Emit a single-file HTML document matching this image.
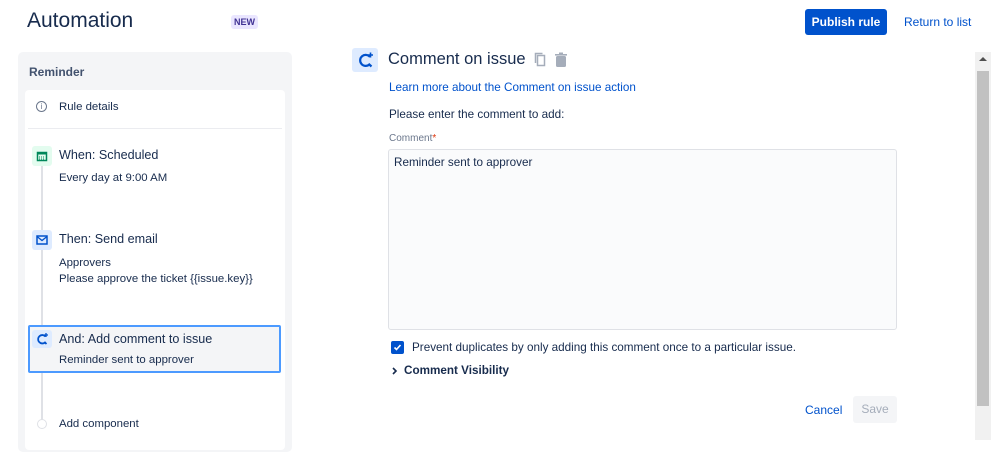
<!DOCTYPE html>
<html><head><style>
*{box-sizing:border-box;margin:0;padding:0}
body{width:999px;height:440px;overflow:hidden;background:#fff;font-family:"Liberation Sans",sans-serif;color:#172b4d;position:relative;font-size:12px}
.a{position:absolute;white-space:nowrap}
.s{font-size:11.4px}
</style></head><body>
<div class="a" style="left:27px;top:9px;font-size:21px;color:#172b4d">Automation</div>
<div class="a" style="left:231px;top:15px;background:#eae6ff;color:#403294;font-size:9px;font-weight:bold;padding:2px 3px;border-radius:3px">NEW</div>
<div class="a" style="left:805px;top:9px;width:82px;height:26px;background:#0052cc;border-radius:3px;color:#fff;font-size:12px;font-weight:bold;text-align:center;line-height:26px">Publish rule</div>
<div class="a" style="left:904px;top:15px;color:#0052cc;font-size:12px">Return to list</div>

<div class="a" style="left:18px;top:52px;width:274px;height:400px;background:#f4f5f7;border-radius:5px"></div>
<div class="a" style="left:29px;top:65px;font-size:12px;font-weight:bold;color:#42526e">Reminder</div>
<div class="a" style="left:25px;top:90px;width:260px;height:360px;background:#fff;border-radius:4px"></div>
<div class="a" style="left:36px;top:101px;width:11px;height:11px;border:1px solid #6b778c;border-radius:50%;font-size:8px;text-align:center;line-height:9px;color:#6b778c">i</div>
<div class="a s" style="left:59px;top:101px">Rule details</div>
<div class="a" style="left:28px;top:128px;width:254px;height:1px;background:#ebecf0"></div>
<div class="a" style="left:41px;top:160px;width:2px;height:262px;background:#dfe1e6"></div>
<div class="a" style="left:32px;top:146px;width:20px;height:20px;background:#e3fcef;border-radius:3px"><svg width="20" height="20"><rect x="5.5" y="6.5" width="9" height="8" fill="none" stroke="#00875a" stroke-width="1.5"/><rect x="5" y="6" width="10" height="2.5" fill="#00875a"/><path d="M7 11h6M7 13h6" stroke="#00875a" stroke-width="1" stroke-dasharray="1 1"/></svg></div>
<div class="a" style="left:59px;top:148px;font-size:12.6px">When: Scheduled</div>
<div class="a s" style="left:59px;top:172px">Every day at 9:00 AM</div>
<div class="a" style="left:32px;top:230px;width:20px;height:20px;background:#deebff;border-radius:3px"><svg width="20" height="20"><rect x="5" y="6" width="10" height="8" fill="none" stroke="#0052cc" stroke-width="1.5"/><path d="M5 6.5l5 4 5-4" fill="none" stroke="#0052cc" stroke-width="1.3"/></svg></div>
<div class="a" style="left:59px;top:232px;font-size:12.6px">Then: Send email</div>
<div class="a s" style="left:59px;top:255px;line-height:16px">Approvers<br>Please approve the ticket {{issue.key}}</div>
<div class="a" style="left:28px;top:325px;width:253px;height:48px;background:#f4f5f7;border:2px solid #4c9aff;border-radius:2px"></div>
<div class="a" style="left:32px;top:330px;width:20px;height:18px;background:#deebff;border-radius:3px"><svg width="20" height="18"><path d="M13.5 6.5A4.2 4.2 0 1 0 13 12.5L14.5 14" fill="none" stroke="#0052cc" stroke-width="1.8"/><path d="M14 3v4M12 5h4" stroke="#0052cc" stroke-width="1.3"/></svg></div>
<div class="a" style="left:59px;top:332px;font-size:12.6px">And: Add comment to issue</div>
<div class="a s" style="left:59px;top:354px">Reminder sent to approver</div>
<div class="a" style="left:37px;top:419px;width:10px;height:10px;border:1px solid #dfe1e6;border-radius:50%;background:#fff"></div>
<div class="a s" style="left:59px;top:418px">Add component</div>

<div class="a" style="left:352px;top:48px;width:26px;height:24px;background:#deebff;border-radius:3px"><svg width="26" height="24"><path d="M18 9A5.5 5.5 0 1 0 17.3 16.5L19.5 18.5" fill="none" stroke="#0052cc" stroke-width="2.2"/><path d="M18.5 4.5v5M16 7h5" stroke="#0052cc" stroke-width="1.6"/></svg></div>
<div class="a" style="left:388px;top:50px;font-size:16.5px">Comment on issue</div>
<svg class="a" style="left:533px;top:51px" width="40" height="18"><rect x="4.5" y="4.5" width="7" height="10" fill="none" stroke="#a5adba" stroke-width="1.5"/><path d="M2.5 12V2.5h7" fill="none" stroke="#a5adba" stroke-width="1.5"/><rect x="23" y="5" width="10" height="11" rx="1.5" fill="#a5adba"/><rect x="22" y="3" width="12" height="1.6" fill="#a5adba"/><rect x="26" y="1.5" width="4" height="2" fill="#a5adba"/></svg>
<div class="a" style="left:389px;top:81px;color:#0052cc;font-size:11.7px">Learn more about the Comment on issue action</div>
<div class="a" style="left:389px;top:108px;font-size:11.7px">Please enter the comment to add:</div>
<div class="a" style="left:389px;top:133px;font-size:10px;color:#6b778c">Comment<span style="color:#de350b">*</span></div>
<div class="a" style="left:388px;top:149px;width:509px;height:181px;background:#fafbfc;border:1px solid #dfe1e6;border-radius:3px"></div>
<div class="a" style="left:394px;top:156px;font-size:11.7px">Reminder sent to approver</div>
<div class="a" style="left:391px;top:341px;width:13px;height:13px;background:#0052cc;border-radius:2px"><svg width="13" height="13"><path d="M3.5 6.5l2 2 4-4.5" fill="none" stroke="#fff" stroke-width="1.6"/></svg></div>
<div class="a" style="left:412px;top:341px;font-size:11.7px">Prevent duplicates by only adding this comment once to a particular issue.</div>
<svg class="a" style="left:391px;top:366px" width="8" height="10"><path d="M2 2l3 3-3 3" fill="none" stroke="#172b4d" stroke-width="1.6"/></svg>
<div class="a" style="left:404px;top:364px;font-size:11.7px;font-weight:bold">Comment Visibility</div>
<div class="a" style="left:805px;top:403px;color:#0052cc;font-size:12px">Cancel</div>
<div class="a" style="left:853px;top:396px;width:44px;height:27px;background:#f4f5f7;border-radius:3px;color:#a5adba;font-size:12px;text-align:center;line-height:27px">Save</div>

<div class="a" style="left:975px;top:52px;width:16px;height:388px;background:#f1f1f1"></div>
<div class="a" style="left:979px;top:57px;width:0;height:0;border-left:4px solid transparent;border-right:4px solid transparent;border-bottom:4px solid #505050"></div>
<div class="a" style="left:977px;top:71px;width:12px;height:335px;background:#c1c1c1"></div>
</body></html>
